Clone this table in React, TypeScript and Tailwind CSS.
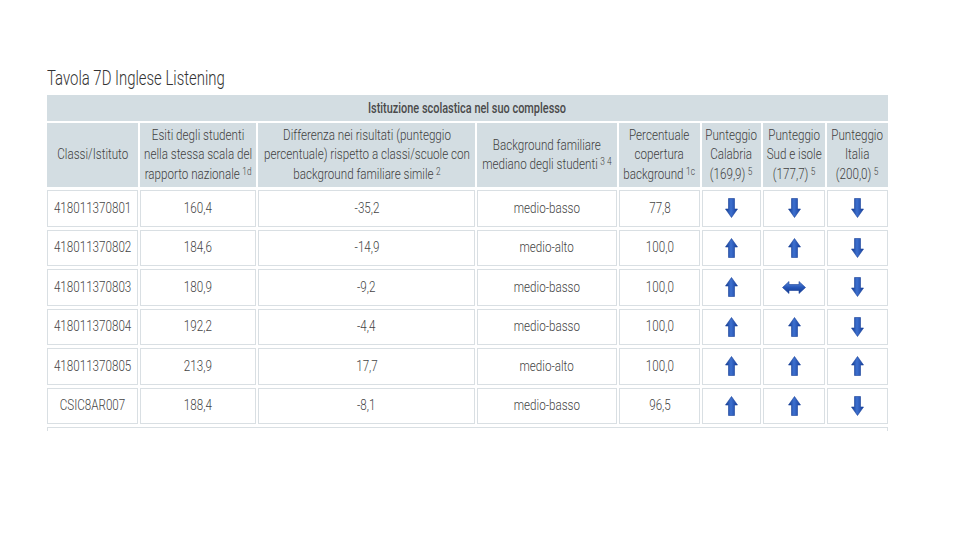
import React from 'react'

type Dir = 'up' | 'down' | 'both'

const rows: { id: string; esiti: string; diff: string; bg: string; perc: string; arrows: Dir[] }[] = [
  { id: '418011370801', esiti: '160,4', diff: '-35,2', bg: 'medio-basso', perc: '77,8', arrows: ['down', 'down', 'down'] },
  { id: '418011370802', esiti: '184,6', diff: '-14,9', bg: 'medio-alto', perc: '100,0', arrows: ['up', 'up', 'down'] },
  { id: '418011370803', esiti: '180,9', diff: '-9,2', bg: 'medio-basso', perc: '100,0', arrows: ['up', 'both', 'down'] },
  { id: '418011370804', esiti: '192,2', diff: '-4,4', bg: 'medio-basso', perc: '100,0', arrows: ['up', 'up', 'down'] },
  { id: '418011370805', esiti: '213,9', diff: '17,7', bg: 'medio-alto', perc: '100,0', arrows: ['up', 'up', 'up'] },
  { id: 'CSIC8AR007', esiti: '188,4', diff: '-8,1', bg: 'medio-basso', perc: '96,5', arrows: ['up', 'up', 'down'] },
]

const cols = 'grid-cols-[91px_116px_217px_140px_81px_59px_62px_61px]'

function Arrow({ dir }: { dir: Dir }) {
  if (dir === 'both') {
    return (
      <svg width="24" height="13" viewBox="0 0 24 13">
        <defs>
          <linearGradient id="gh" x1="0" y1="0" x2="0" y2="1">
            <stop offset="0" stopColor="#5b88d8" />
            <stop offset="0.5" stopColor="#2656b8" />
            <stop offset="1" stopColor="#123a8e" />
          </linearGradient>
        </defs>
        <path d="M0.5 6.5 L7 0.5 L7 3.5 L17 3.5 L17 0.5 L23.5 6.5 L17 12.5 L17 9.5 L7 9.5 L7 12.5 Z" fill="url(#gh)" stroke="#173f98" strokeWidth="0.6" />
      </svg>
    )
  }
  const d =
    dir === 'down'
      ? 'M3.5 0.5 L9.5 0.5 L9.5 11 L12.5 11 L6.5 19.5 L0.5 11 L3.5 11 Z'
      : 'M6.5 0.5 L12.5 9 L9.5 9 L9.5 19.5 L3.5 19.5 L3.5 9 L0.5 9 Z'
  return (
    <svg width="13" height="20" viewBox="0 0 13 20">
      <defs>
        <linearGradient id="gv" x1="0" y1="0" x2="1" y2="0">
          <stop offset="0" stopColor="#123a8e" />
          <stop offset="0.45" stopColor="#3d70cf" />
          <stop offset="1" stopColor="#173f9c" />
        </linearGradient>
      </defs>
      <path d={d} fill="url(#gv)" stroke="#173f98" strokeWidth="0.6" />
    </svg>
  )
}

// narrow text: the reference uses a condensed face that is not installed
function T({ children, className = 'scale-x-[0.83]' }: { children: React.ReactNode; className?: string }) {
  return <span className={`inline-block whitespace-nowrap text-center ${className}`}>{children}</span>
}

function Head({ children }: { children: React.ReactNode }) {
  return (
    <div className="bg-[#d3dde2] flex items-center justify-center leading-[19.5px]">
      <T>{children}</T>
    </div>
  )
}

function Sup({ children }: { children: React.ReactNode }) {
  return <sup className="text-[10px] ml-[3px] relative -top-[4px]">{children}</sup>
}

function Cell({ children }: { children: React.ReactNode }) {
  return (
    <div className="border border-[#d9dfe3] bg-white flex items-center justify-center h-[36.5px]">
      {children}
    </div>
  )
}

export default function App() {
  return (
    <div className="w-[960px] h-[540px] bg-white text-[#4a4a4a] font-light" style={{ fontFamily: 'Roboto, "Noto Sans", sans-serif' }}>
      <div className="pl-[47px] pt-[65px]">
        <h1 className="text-[21px] leading-[26px] text-[#333] h-[30px] font-light">
          <span className="inline-block whitespace-nowrap origin-left scale-x-[0.71]">Tavola 7D Inglese Listening</span>
        </h1>
        <div className="w-[841px] h-[336px] overflow-hidden text-[14px]">
          <div className="bg-[#d3dde2] h-[26px] flex items-center justify-center font-medium text-[#4a4a4a]">
            <T className="scale-x-[0.78]">Istituzione scolastica nel suo complesso</T>
          </div>
          <div className={`grid ${cols} gap-x-[2px] mt-[2px] h-[64px] text-[#3f3f3f]`}>
            <Head>Classi/Istituto</Head>
            <Head>
              Esiti degli studenti
              <br />
              nella stessa scala del
              <br />
              rapporto nazionale<Sup>1d</Sup>
            </Head>
            <Head>
              Differenza nei risultati (punteggio
              <br />
              percentuale) rispetto a classi/scuole con
              <br />
              background familiare simile<Sup>2</Sup>
            </Head>
            <Head>
              Background familiare
              <br />
              mediano degli studenti<Sup>3 4</Sup>
            </Head>
            <Head>
              Percentuale
              <br />
              copertura
              <br />
              background<Sup>1c</Sup>
            </Head>
            <Head>
              Punteggio
              <br />
              Calabria
              <br />
              (169,9)<Sup>5</Sup>
            </Head>
            <Head>
              Punteggio
              <br />
              Sud e isole
              <br />
              (177,7)<Sup>5</Sup>
            </Head>
            <Head>
              Punteggio
              <br />
              Italia
              <br />
              (200,0)<Sup>5</Sup>
            </Head>
          </div>
          <div className={`grid ${cols} gap-x-[2px] gap-y-[3px] mt-[3px] text-[#444]`}>
            {rows.map((r) => (
              <React.Fragment key={r.id}>
                <Cell><T>{r.id}</T></Cell>
                <Cell><T>{r.esiti}</T></Cell>
                <Cell><T>{r.diff}</T></Cell>
                <Cell><T>{r.bg}</T></Cell>
                <Cell><T>{r.perc}</T></Cell>
                {r.arrows.map((a, i) => (
                  <Cell key={i}>
                    <Arrow dir={a} />
                  </Cell>
                ))}
              </React.Fragment>
            ))}
            <div className="col-span-8 border border-[#d9dfe3] h-[36px]" />
          </div>
        </div>
      </div>
    </div>
  )
}
